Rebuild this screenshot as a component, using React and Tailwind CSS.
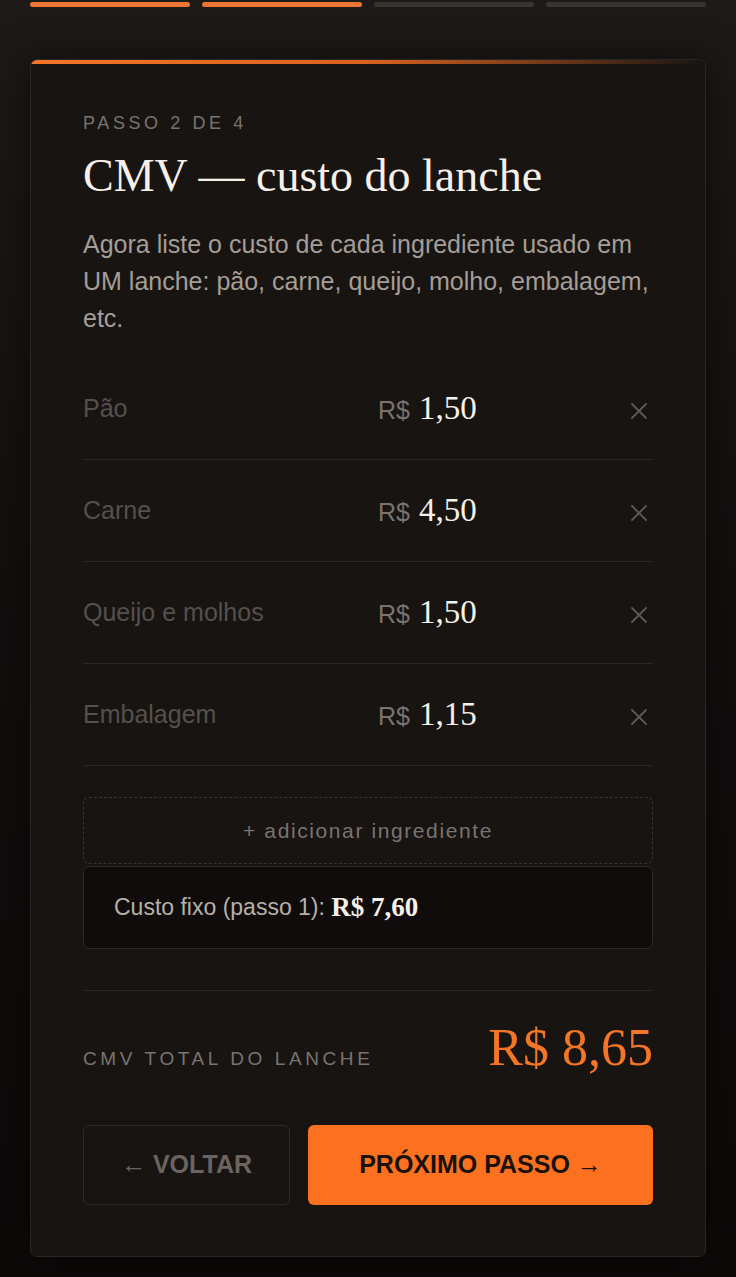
import { useState } from 'react';

const serif = "font-['Liberation_Serif','DejaVu_Serif',serif]";

function XIcon() {
  return (
    <svg width="18" height="18" viewBox="0 0 18 18" fill="none">
      <path d="M2 2L16 16M16 2L2 16" stroke="#5f5955" strokeWidth="1.8" strokeLinecap="round" />
    </svg>
  );
}

function IngredientRow({ name, value }) {
  return (
    <div className="grid grid-cols-[295px_1fr_auto] items-center h-[102px] border-b border-[#2b2725]">
      <span className="text-[25px] text-[#55504c]">{name}</span>
      <div className="flex items-baseline gap-[9px]">
        <span className="text-[25px] text-[#7a7370]">R$</span>
        <span className={`${serif} text-[33px] text-[#f6f0e8]`}>{value}</span>
      </div>
      <span className="pr-[5px] pt-[4px]">
        <XIcon />
      </span>
    </div>
  );
}

export default function App() {
  const [items] = useState([
    { name: 'Pão', value: '1,50' },
    { name: 'Carne', value: '4,50' },
    { name: 'Queijo e molhos', value: '1,50' },
    { name: 'Embalagem', value: '1,15' },
  ]);

  return (
    <div className="min-h-[1277px] bg-gradient-to-b from-[#1d1a18] via-[#110f0e] to-[#0c0a09] font-['Liberation_Sans',Arial,sans-serif] px-[30px] pt-[2px] pb-[20px]">
      {/* progresso */}
      <div className="grid grid-cols-4 gap-[12px]">
        <div className="h-[5px] rounded-full bg-[#ee7534]" />
        <div className="h-[5px] rounded-full bg-[#ee7534]" />
        <div className="h-[5px] rounded-full bg-[#383433]" />
        <div className="h-[5px] rounded-full bg-[#383433]" />
      </div>

      <div className="mt-[52px] rounded-[7px] border border-[#2a2624] bg-[#171412] overflow-hidden shadow-[0_0_40px_rgba(0,0,0,0.5)]">
        <div className="h-[4px] bg-gradient-to-r from-[#f37526] via-[#d9621f] to-transparent" />
        <div className="px-[52px] pt-[47px] pb-[51px]">
          <p className="text-[18px] leading-[24px] tracking-[3.6px] text-[#7a7370]">PASSO 2 DE 4</p>
          <h1 className={`${serif} mt-[17px] text-[46px] leading-[48px] text-[#f6f0e8]`}>
            CMV — custo do lanche
          </h1>
          <p className="mt-[26px] text-[25px] leading-[37px] text-[#a59d97]">
            Agora liste o custo de cada ingrediente usado em UM lanche: pão, carne, queijo, molho, embalagem, etc.
          </p>

          <div className="mt-[21px]">
            {items.map(item => (
              <IngredientRow key={item.name} name={item.name} value={item.value} />
            ))}
          </div>

          <button className="mt-[31px] w-full h-[67px] rounded-[6px] border border-dashed border-[#3a3532] text-[21px] tracking-[1.6px] text-[#7a7370]">
            + adicionar ingrediente
          </button>

          <div className="mt-[2px] h-[83px] rounded-[6px] border border-[#2e2a28] bg-[#0f0c0b] flex items-center px-[30px]">
            <span className="text-[23px] text-[#b8b0a8]">Custo fixo (passo 1):&nbsp;</span>
            <span className={`${serif} font-bold text-[27px] text-[#f6f0e8]`}>R$ 7,60</span>
          </div>

          <div className="mt-[41px] border-t border-[#2b2725] pt-[29px] flex items-baseline justify-between">
            <span className="text-[19px] tracking-[3.6px] text-[#7a7370]">CMV TOTAL DO LANCHE</span>
            <span className={`${serif} text-[52px] leading-[56px] text-[#f37526]`}>R$ 8,65</span>
          </div>

          <div className="mt-[49px] flex gap-[18px]">
            <button className="w-[207px] h-[80px] rounded-[6px] border border-[#2e2a28] text-[25px] font-bold text-[#6b6460]">
              ← VOLTAR
            </button>
            <button className="flex-1 h-[80px] rounded-[6px] bg-[#fb7120] text-[25px] font-bold text-[#1c120c]">
              PRÓXIMO PASSO →
            </button>
          </div>
        </div>
      </div>
    </div>
  );
}
